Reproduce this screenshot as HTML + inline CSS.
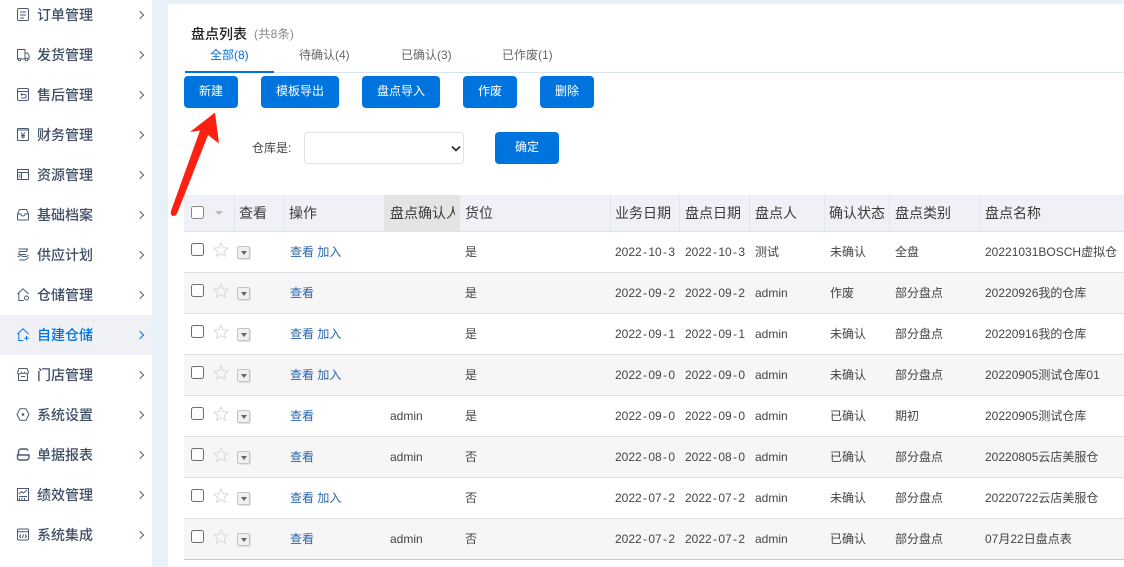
<!DOCTYPE html>
<html lang="zh-CN">
<head>
<meta charset="utf-8">
<title>盘点列表</title>
<style>
*{box-sizing:border-box}
html,body{margin:0;padding:0;width:1124px;height:567px;overflow:hidden;background:#e8f0f8;font-family:"Liberation Sans","Noto Sans CJK SC",sans-serif}
.abs,.side,.main,.it,.btn,.c,.r,.th,.tab{position:absolute}
.side{left:0;top:0;width:152px;height:567px;background:#fff}
.it{left:0;width:152px;height:40px;line-height:40px;font-size:14px;font-weight:500;color:#3f4d65}
.it span{position:absolute;left:37px;top:0}
.it svg{position:absolute;left:16px;top:12px;width:14px;height:15px;fill:none;stroke:#4a5a74;stroke-width:1}
.it i{position:absolute;left:137px;top:17px;width:6px;height:6px;border-top:1.1px solid #56647c;border-right:1.1px solid #56647c;transform:rotate(45deg)}
.it.on{background:#eff1f6;color:#0074e0}
.it.on svg{stroke:#0074e0}
.it.on i{border-color:#0074e0}
.main{left:168px;top:4px;width:956px;height:563px;background:#fff}
.tab{top:46px;font-size:12px;line-height:18px;color:#666;white-space:nowrap}
.btn{top:76px;height:32px;line-height:31px;background:#0074de;border-radius:4px;color:#fff;font-size:12px;text-align:center}
.thead{position:absolute;left:184px;top:195px;width:940px;height:37px;background:#eff1f6;border-bottom:1px solid #dfe1e8}
.th{top:0;height:36px;line-height:36px;font-size:14px;color:#3a3a3a;white-space:nowrap;overflow:hidden}
.sep{position:absolute;top:0;width:1px;height:36px;background:#e2e5ec}
.r{left:184px;width:940px;height:41px;border-bottom:1px solid #dfe0e6;font-size:12px;color:#444;background:#fff}
.r.g{background:#f6f6f6}
.c{top:0;height:40px;line-height:40px;white-space:nowrap;overflow:hidden}
.d{width:60px}
.d u{text-decoration:none;padding:0 1.33px}
.l{color:#2a66ad}
.cb{position:absolute;left:7px;top:11px;width:13px;height:13px;border:1px solid #6f6f6f;border-radius:2.5px;background:#fff}
.star{position:absolute;left:29px;top:10px;width:16px;height:15px}
.dd{position:absolute;left:53px;top:14px;width:13px;height:13px;border:1px solid #c4c4c4;border-radius:2px;background:#f0f0f0;box-shadow:1px 1px 0 #e2e2e2}
.dd:after{content:"";position:absolute;left:2.5px;top:4px;border:3.5px solid transparent;border-top:4px solid #666;border-bottom:0}
</style>
</head>
<body>
<div class="side">
<div class="it" style="top:-5px"><svg viewBox="0 0 14 15"><rect x="1.500" y="1.500" width="11" height="12" rx="1.500"/><path d="M4 5h6M4 8h6M4 11h4"/></svg><span>订单管理</span><i></i></div>
<div class="it" style="top:35px"><svg viewBox="0 0 14 15"><path d="M9 12H5M2.500 12H1.500V2.500h7.500V12M9 6h2.500L13 8.500V12h-1"/><circle cx="3.500" cy="12.500" r="1.300"/><circle cx="10.500" cy="12.500" r="1.300"/></svg><span>发货管理</span><i></i></div>
<div class="it" style="top:75px"><svg viewBox="0 0 14 15"><rect x="1.500" y="1.500" width="11" height="12" rx="1.500"/><path d="M1.500 4.500h11M5 7.500h3.500a1.500 1.500 0 0 1 0 3.500H5M5 7.500l1.200-1.200M5 7.500l1.200 1.200"/></svg><span>售后管理</span><i></i></div>
<div class="it" style="top:115px"><svg viewBox="0 0 14 15"><rect x="1.500" y="1.500" width="11" height="12" rx="1"/><path d="M1.500 3h11M5 5.500l2 2.500 2-2.500M7 8v3.500M5 8.500h4M5 10h4"/></svg><span>财务管理</span><i></i></div>
<div class="it" style="top:155px"><svg viewBox="0 0 14 15"><rect x="1.500" y="2.500" width="11" height="10"/><path d="M1.500 5.500h11M5.500 5.500v7M2.500 8h2M2.500 10h2" /></svg><span>资源管理</span><i></i></div>
<div class="it" style="top:195px"><svg viewBox="0 0 14 15"><path d="M3.500 2.500h7l2 4.500v5a1 1 0 0 1-1 1h-9a1 1 0 0 1-1-1V7zM1.500 7h3.500a2 2 0 0 0 4 0h3.500"/></svg><span>基础档案</span><i></i></div>
<div class="it" style="top:235px"><svg viewBox="0 0 14 15"><path d="M2.500 2h9l-1 2.500h-7.500M3 4.500v3h7M1.500 10c2-1.500 4-1.500 5.500-.5h3l2.500-1M3 13h6l3.500-2.500"/></svg><span>供应计划</span><i></i></div>
<div class="it" style="top:275px"><svg viewBox="0 0 14 15"><path d="M1.500 7L7 1.800 12.500 7M2.800 6v7.500h5"/><circle cx="10.500" cy="11" r="2"/></svg><span>仓储管理</span><i></i></div>
<div class="it on" style="top:315px"><svg viewBox="0 0 14 15"><path d="M1.500 7L7 1.800 12.500 7M2.800 6v7.500h4.500M10.500 9v4.500M8.300 11.300h4.400"/></svg><span>自建仓储</span><i></i></div>
<div class="it" style="top:355px"><svg viewBox="0 0 14 15"><path d="M3 1.500h8l1.500 4a2 2 0 0 1-3.800 0 2 2 0 0 1-3.400 0 2 2 0 0 1-3.800 0zM2.500 7v6.500h9V7M5 9.500h4"/></svg><span>门店管理</span><i></i></div>
<div class="it" style="top:395px"><svg viewBox="0 0 14 15"><path d="M4 1.800h6L13 7.500l-3 5.700H4L1 7.500z"/><circle cx="7" cy="7.500" r=".8" fill="#4a5a74"/></svg><span>系统设置</span><i></i></div>
<div class="it" style="top:435px"><svg viewBox="0 0 14 15" style="stroke-width:1.400"><path d="M2.500 8V4.500a2.500 2.500 0 0 1 2.500-2.500h5a2.500 2.500 0 0 1 2 1.500M1.500 8h11.500v2.500a2.500 2.500 0 0 1-2.500 2.500h-7a2 2 0 0 1-2-2z"/></svg><span>单据报表</span><i></i></div>
<div class="it" style="top:475px"><svg viewBox="0 0 14 15"><rect x="1.500" y="1.500" width="11" height="12"/><path d="M3 7l2.500-2.500 2 1.500L11 3M3 9.500h8M3.500 11v2M6 11v2M8.500 11v2"/></svg><span>绩效管理</span><i></i></div>
<div class="it" style="top:515px"><svg viewBox="0 0 14 15"><rect x="1.500" y="2" width="11" height="11" rx="1"/><path d="M1.500 4.800h11M5 7.500L3.500 9.200 5 11M9 7.500l1.500 1.700L9 11M7.600 7.500l-1.200 3.500"/></svg><span>系统集成</span><i></i></div>
</div>

<div class="main"></div>

<div class="abs" style="left:191px;top:24px;font-size:14px;font-weight:500;line-height:20px;color:#222">盘点列表</div>
<div class="abs" style="left:254px;top:24px;font-size:12px;letter-spacing:.3px;line-height:20px;color:#888">(共8条)</div>

<div class="tab" style="left:210px;color:#0074de">全部(8)</div>
<div class="tab" style="left:299px">待确认(4)</div>
<div class="tab" style="left:401px">已确认(3)</div>
<div class="tab" style="left:502px">已作废(1)</div>
<div class="abs" style="left:185px;top:72px;width:939px;height:1px;background:#d4e4f4"></div>
<div class="abs" style="left:185px;top:71px;width:89px;height:2px;background:#0074de"></div>

<div class="btn" style="left:184px;width:54px">新建</div>
<div class="btn" style="left:261px;width:78px">模板导出</div>
<div class="btn" style="left:362px;width:78px">盘点导入</div>
<div class="btn" style="left:463px;width:54px">作废</div>
<div class="btn" style="left:540px;width:54px">删除</div>

<div class="abs" style="left:252px;top:139px;font-size:12px;line-height:18px;color:#444">仓库是:</div>
<div class="abs" style="left:304px;top:132px;width:160px;height:32px;border:1px solid #e2e2e2;border-radius:4px;background:#fff">
<svg style="position:absolute;left:146px;top:12px" width="10" height="8" viewBox="0 0 10 8"><path d="M1 1.500L5 5.500 9 1.500" fill="none" stroke="#333" stroke-width="1.800"/></svg>
</div>
<div class="btn" style="left:495px;top:132px;width:64px;height:32px">确定</div>

<div class="thead">
<div class="abs" style="left:200px;top:0;width:76px;height:36px;background:#e4e4e4"></div>
<div class="cb" style="border-color:#888"></div>
<div class="abs" style="left:31px;top:16px;border:4px solid transparent;border-top:4px solid #bbb;border-bottom:0"></div>
<div class="sep" style="left:50px"></div><div class="sep" style="left:100px"></div><div class="sep" style="left:426px"></div><div class="sep" style="left:495px"></div><div class="sep" style="left:565px"></div><div class="sep" style="left:640px"></div><div class="sep" style="left:705px"></div><div class="sep" style="left:795px"></div>
<div class="th" style="left:55px">查看</div>
<div class="th" style="left:105px">操作</div>
<div class="th" style="left:206px;width:65px">盘点确认人</div>
<div class="th" style="left:281px">货位</div>
<div class="th" style="left:431px">业务日期</div>
<div class="th" style="left:501px">盘点日期</div>
<div class="th" style="left:571px">盘点人</div>
<div class="th" style="left:645px">确认状态</div>
<div class="th" style="left:711px">盘点类别</div>
<div class="th" style="left:801px">盘点名称</div>
</div>

<svg width="0" height="0" style="position:absolute"><defs><path id="s" d="M8.500 1l2.200 5 5.300.5-4 3.500 1.200 5.200-4.700-2.700-4.700 2.700 1.200-5.200-4-3.500 5.300-.5z"/></defs></svg>

<div class="r" style="top:232px">
<div class="cb"></div><svg class="star" viewBox="0 0 17 16"><use href="#s" fill="#fff" stroke="#d8d8d8"/></svg><div class="dd"></div>
<div class="c l" style="left:106px">查看 加入</div><div class="c" style="left:281px">是</div>
<div class="c d" style="left:431px">2022<u>-</u>10<u>-</u>31</div><div class="c d" style="left:501px">2022<u>-</u>10<u>-</u>31</div><div class="c" style="left:571px">测试</div><div class="c" style="left:646px">未确认</div><div class="c" style="left:711px">全盘</div><div class="c" style="left:801px">20221031BOSCH虚拟仓</div>
</div>
<div class="r g" style="top:273px">
<div class="cb"></div><svg class="star" viewBox="0 0 17 16"><use href="#s" fill="#f6f6f6" stroke="#d8d8d8"/></svg><div class="dd"></div>
<div class="c l" style="left:106px">查看</div><div class="c" style="left:281px">是</div>
<div class="c d" style="left:431px">2022<u>-</u>09<u>-</u>26</div><div class="c d" style="left:501px">2022<u>-</u>09<u>-</u>26</div><div class="c" style="left:571px">admin</div><div class="c" style="left:646px">作废</div><div class="c" style="left:711px">部分盘点</div><div class="c" style="left:801px">20220926我的仓库</div>
</div>
<div class="r" style="top:314px">
<div class="cb"></div><svg class="star" viewBox="0 0 17 16"><use href="#s" fill="#fff" stroke="#d8d8d8"/></svg><div class="dd"></div>
<div class="c l" style="left:106px">查看 加入</div><div class="c" style="left:281px">是</div>
<div class="c d" style="left:431px">2022<u>-</u>09<u>-</u>16</div><div class="c d" style="left:501px">2022<u>-</u>09<u>-</u>16</div><div class="c" style="left:571px">admin</div><div class="c" style="left:646px">未确认</div><div class="c" style="left:711px">部分盘点</div><div class="c" style="left:801px">20220916我的仓库</div>
</div>
<div class="r g" style="top:355px">
<div class="cb"></div><svg class="star" viewBox="0 0 17 16"><use href="#s" fill="#f6f6f6" stroke="#d8d8d8"/></svg><div class="dd"></div>
<div class="c l" style="left:106px">查看 加入</div><div class="c" style="left:281px">是</div>
<div class="c d" style="left:431px">2022<u>-</u>09<u>-</u>05</div><div class="c d" style="left:501px">2022<u>-</u>09<u>-</u>05</div><div class="c" style="left:571px">admin</div><div class="c" style="left:646px">未确认</div><div class="c" style="left:711px">部分盘点</div><div class="c" style="left:801px">20220905测试仓库01</div>
</div>
<div class="r" style="top:396px">
<div class="cb"></div><svg class="star" viewBox="0 0 17 16"><use href="#s" fill="#fff" stroke="#d8d8d8"/></svg><div class="dd"></div>
<div class="c l" style="left:106px">查看</div><div class="c" style="left:206px">admin</div><div class="c" style="left:281px">是</div>
<div class="c d" style="left:431px">2022<u>-</u>09<u>-</u>05</div><div class="c d" style="left:501px">2022<u>-</u>09<u>-</u>05</div><div class="c" style="left:571px">admin</div><div class="c" style="left:646px">已确认</div><div class="c" style="left:711px">期初</div><div class="c" style="left:801px">20220905测试仓库</div>
</div>
<div class="r g" style="top:437px">
<div class="cb"></div><svg class="star" viewBox="0 0 17 16"><use href="#s" fill="#f6f6f6" stroke="#d8d8d8"/></svg><div class="dd"></div>
<div class="c l" style="left:106px">查看</div><div class="c" style="left:206px">admin</div><div class="c" style="left:281px">否</div>
<div class="c d" style="left:431px">2022<u>-</u>08<u>-</u>05</div><div class="c d" style="left:501px">2022<u>-</u>08<u>-</u>05</div><div class="c" style="left:571px">admin</div><div class="c" style="left:646px">已确认</div><div class="c" style="left:711px">部分盘点</div><div class="c" style="left:801px">20220805云店美服仓</div>
</div>
<div class="r" style="top:478px">
<div class="cb"></div><svg class="star" viewBox="0 0 17 16"><use href="#s" fill="#fff" stroke="#d8d8d8"/></svg><div class="dd"></div>
<div class="c l" style="left:106px">查看 加入</div><div class="c" style="left:281px">否</div>
<div class="c d" style="left:431px">2022<u>-</u>07<u>-</u>22</div><div class="c d" style="left:501px">2022<u>-</u>07<u>-</u>22</div><div class="c" style="left:571px">admin</div><div class="c" style="left:646px">未确认</div><div class="c" style="left:711px">部分盘点</div><div class="c" style="left:801px">20220722云店美服仓</div>
</div>
<div class="r g" style="top:519px;border-bottom-color:#c9c9c9">
<div class="cb"></div><svg class="star" viewBox="0 0 17 16"><use href="#s" fill="#f6f6f6" stroke="#d8d8d8"/></svg><div class="dd"></div>
<div class="c l" style="left:106px">查看</div><div class="c" style="left:206px">admin</div><div class="c" style="left:281px">否</div>
<div class="c d" style="left:431px">2022<u>-</u>07<u>-</u>22</div><div class="c d" style="left:501px">2022<u>-</u>07<u>-</u>22</div><div class="c" style="left:571px">admin</div><div class="c" style="left:646px">已确认</div><div class="c" style="left:711px">部分盘点</div><div class="c" style="left:801px">07月22日盘点表</div>
</div>
<div class="abs" style="left:184px;top:560px;width:940px;height:7px;background:#fff"></div>

<svg class="abs" style="left:165px;top:105px" width="60" height="115" viewBox="0 0 60 115">
<path d="M50 7.500L25 27 35 25.500 6.500 104.500C5 108 6 111 8.500 111 10.500 111 11.500 109.500 12.500 107.500L43 30 54 38.500z" fill="#fb2012"/>
</svg>
</body>
</html>
